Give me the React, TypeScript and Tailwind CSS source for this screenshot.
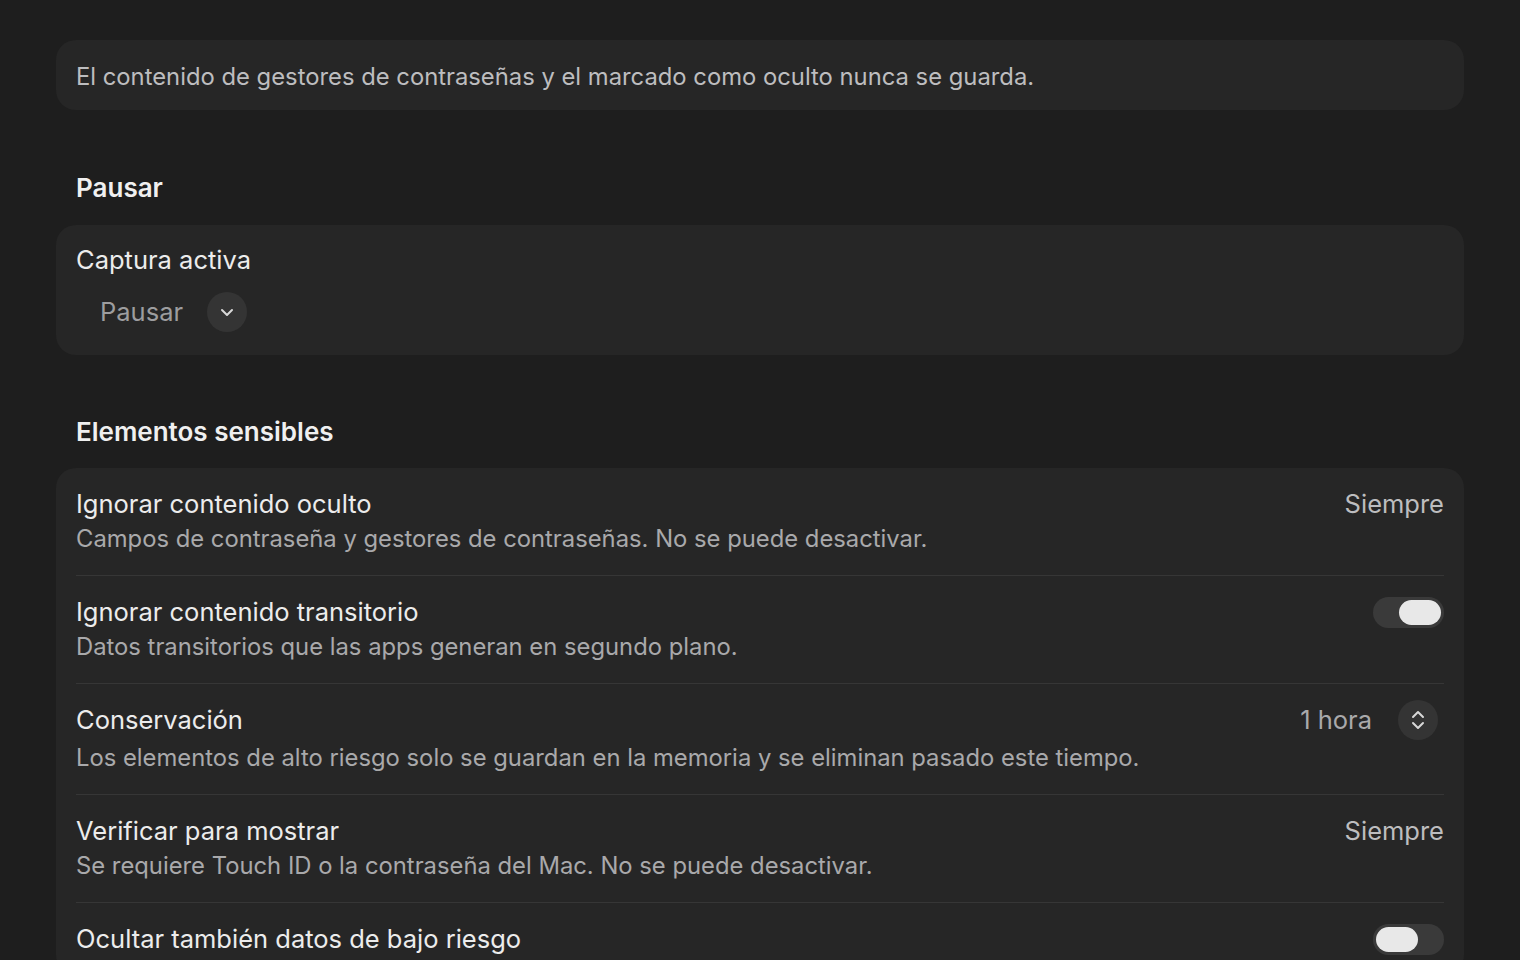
import React, { useState } from "react";

const font = { fontFamily: "Inter, 'Noto Sans', sans-serif" };

const Toggle = ({ on, onChange }: { on: boolean; onChange: () => void }) => (
    <button
        onClick={onChange}
        className={`flex items-center w-[71px] h-[31px] rounded-full p-[3px] bg-[#3a3a3a] ${on ? "justify-end" : "justify-start"}`}
    >
        <span className="block w-[42px] h-[25px] rounded-full bg-[#e8e8e8]" />
    </button>
);

const Row = ({
    title,
    subtitle,
    right,
    last,
    tall,
}: {
    title: string;
    subtitle?: string;
    right: React.ReactNode;
    last?: boolean;
    tall?: boolean;
}) => (
    <div className={`flex items-start justify-between pt-5 pb-5 ${last ? "" : "border-b border-[#363636]"}`}>
        <div className="flex flex-col">
            <p className="text-[25.5px] leading-[32px] text-[#ececec]">{title}</p>
            {subtitle && (
                <p className={`text-[23.8px] leading-[32px] ${tall ? "mt-[6px]" : "mt-[3px]"} text-[#a9a9ab]`}>{subtitle}</p>
            )}
        </div>
        <div className="h-[32px] flex items-center">{right}</div>
    </div>
);

const App = () => {
    const [transitorio, setTransitorio] = useState(true);
    const [bajoRiesgo, setBajoRiesgo] = useState(false);

    return (
        <div className="min-h-[960px] bg-[#1e1e1e] pt-10 px-14 pb-10" style={font}>
            <div className="h-[70px] flex items-center px-5 pt-[3px] rounded-[20px] bg-[#262626]">
                <p className="text-[23.8px] text-[#bdbdbf]">
                    El contenido de gestores de contraseñas y el marcado como oculto nunca se guarda.
                </p>
            </div>

            <h2 className="mt-[63px] px-5 text-[26px] leading-[30px] font-semibold text-[#f0f0f0]">Pausar</h2>
            <div className="mt-[22px] h-[130px] rounded-[20px] bg-[#262626] px-5 pt-[19px]">
                <p className="text-[25.5px] leading-[32px] text-[#ececec]">Captura activa</p>
                <div className="flex items-center mt-[16px] pl-6 gap-[24px]">
                    <span className="text-[25.5px] leading-[40px] text-[#9d9d9f]">Pausar</span>
                    <span className="w-[40px] h-[40px] rounded-full bg-[#343434] flex items-center justify-center">
                        <svg width="16" height="16" viewBox="0 0 16 16" fill="none">
                            <path d="M3 6 L8 11 L13 6" stroke="#d8d8d8" strokeWidth="2" strokeLinecap="round" strokeLinejoin="round" />
                        </svg>
                    </span>
                </div>
            </div>

            <h2 className="mt-[62px] px-5 text-[26px] leading-[30px] font-semibold text-[#f0f0f0]">Elementos sensibles</h2>
            <div className="mt-[21px] rounded-[20px] bg-[#262626] px-5">
                <Row
                    title="Ignorar contenido oculto"
                    subtitle="Campos de contraseña y gestores de contraseñas. No se puede desactivar."
                    right={<span className="text-[25.5px] text-[#bdbdbf]">Siempre</span>}
                />
                <Row
                    title="Ignorar contenido transitorio"
                    subtitle="Datos transitorios que las apps generan en segundo plano."
                    right={<Toggle on={transitorio} onChange={() => setTransitorio(!transitorio)} />}
                />
                <Row
                    title="Conservación"
                    subtitle="Los elementos de alto riesgo solo se guardan en la memoria y se eliminan pasado este tiempo."
                    tall
                    right={
                        <div className="flex items-center gap-[26px] mr-[6px]">
                            <span className="text-[25.5px] text-[#a9a9ab]">1 hora</span>
                            <span className="w-[40px] h-[40px] rounded-full bg-[#343434] flex items-center justify-center">
                                <svg width="18" height="26" viewBox="0 0 18 26" fill="none">
                                    <path d="M4 10 L9 5 L14 10" stroke="#d8d8d8" strokeWidth="2" strokeLinecap="round" strokeLinejoin="round" />
                                    <path d="M4 16 L9 21 L14 16" stroke="#d8d8d8" strokeWidth="2" strokeLinecap="round" strokeLinejoin="round" />
                                </svg>
                            </span>
                        </div>
                    }
                />
                <Row
                    title="Verificar para mostrar"
                    subtitle="Se requiere Touch ID o la contraseña del Mac. No se puede desactivar."
                    right={<span className="text-[25.5px] text-[#bdbdbf]">Siempre</span>}
                />
                <Row
                    title="Ocultar también datos de bajo riesgo"
                    right={<Toggle on={bajoRiesgo} onChange={() => setBajoRiesgo(!bajoRiesgo)} />}
                    last
                />
            </div>
        </div>
    );
};

export default App;
